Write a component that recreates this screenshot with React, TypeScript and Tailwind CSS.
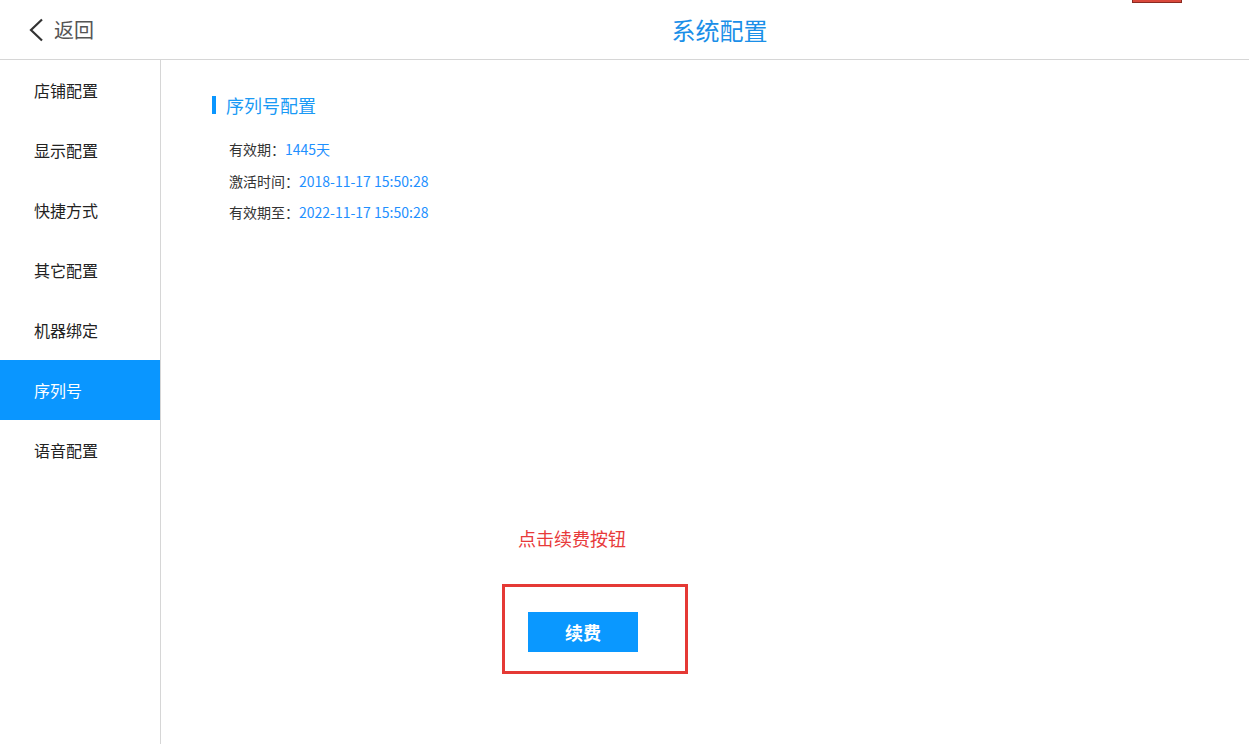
import React from "react";

const menu = ["店铺配置", "显示配置", "快捷方式", "其它配置", "机器绑定", "序列号", "语音配置"];

export default function App() {
  const font = { fontFamily: '"Noto Sans CJK SC", "Liberation Sans", sans-serif' };
  return (
    <div className="w-[1249px] h-[744px] bg-white flex flex-col overflow-hidden" style={font}>
      <header className="relative h-[60px] shrink-0 border-b border-[#d6d6d6] flex items-center">
        <div className="flex items-center pl-[27px] gap-[9px]">
          <svg width="18" height="24" viewBox="0 0 18 24" fill="none" className="mt-[1px]">
            <path d="M15 1.5 L4 12 L15 22.5" stroke="#333" strokeWidth="2.2" />
          </svg>
          <span className="text-[20px] text-[#555] leading-none">返回</span>
        </div>
        <div className="flex-1 flex justify-center pl-[96px]">
          <span className="text-[24px] text-[#1a8fe8] leading-none">系统配置</span>
        </div>
        <div className="absolute left-[1132px] top-[-8px] w-[50px] h-[11px] bg-[#d9483b] border border-[#8a2a22]" />
      </header>
      <div className="flex flex-1">
        <aside className="w-[161px] shrink-0 border-r border-[#d6d6d6] flex flex-col">
          {menu.map((m) => (
            <div
              key={m}
              className={
                m === "序列号"
                  ? "h-[60px] flex items-center pl-[34px] text-[16px] bg-[#0a96ff] text-white"
                  : "h-[60px] flex items-center pl-[34px] text-[16px] text-[#222]"
              }
            >
              {m}
            </div>
          ))}
        </aside>
        <main className="flex-1 flex flex-col pl-[51px] pt-[36px]">
          <div className="flex items-center gap-[10px]">
            <div className="w-[4px] h-[18px] bg-[#0a96ff]" />
            <span className="text-[18px] text-[#1a9af5] leading-none">序列号配置</span>
          </div>
          <div className="flex flex-col pl-[17px] pt-[25px] gap-[11.5px] text-[14px] leading-[20px]">
            <div>
              <span className="text-[#333]">有效期：</span>
              <span className="text-[#1e90ff]">1445天</span>
            </div>
            <div>
              <span className="text-[#333]">激活时间：</span>
              <span className="text-[#1e90ff]">2018-11-17 15:50:28</span>
            </div>
            <div>
              <span className="text-[#333]">有效期至：</span>
              <span className="text-[#1e90ff]">2022-11-17 15:50:28</span>
            </div>
          </div>
          <div className="pl-[306px] pt-[307px] text-[18px] text-[#e83a3a] leading-none">点击续费按钮</div>
          <div className="ml-[290px] mt-[37px] w-[186px] h-[90px] border-[3px] border-[#e53935] pl-[23px] pt-[25px]">
            <div className="w-[110px] h-[40px] bg-[#0a98ff] text-white font-bold text-[18px] flex items-center justify-center">
              续费
            </div>
          </div>
        </main>
      </div>
    </div>
  );
}
